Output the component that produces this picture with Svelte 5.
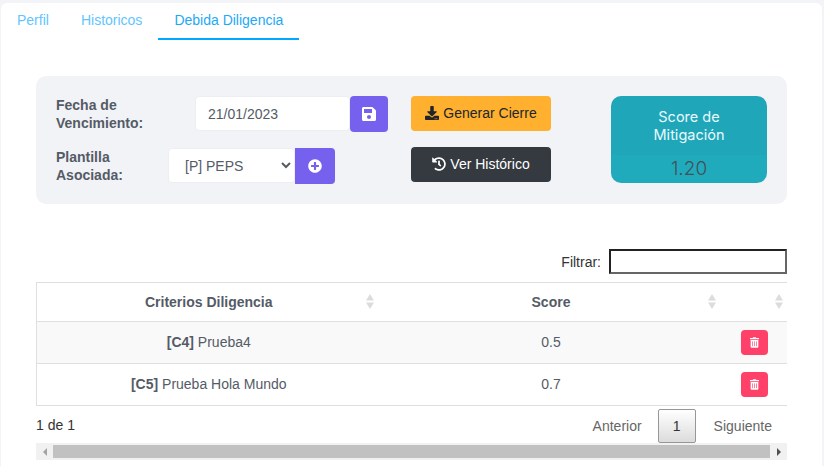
<script>
  let filter = $state('');
  const rows = [
    { code: 'C4', name: 'Prueba4', score: '0.5' },
    { code: 'C5', name: 'Prueba Hola Mundo', score: '0.7' }
  ];
</script>

{#snippet sortIcon()}
  <svg class="sort" width="8" height="15" viewBox="0 0 8 15"><path d="M4 0L8 6.5H0zM4 15L0 8.5h8z" fill="#dcdcdc"/></svg>
{/snippet}

<div class="card">
  <nav class="tabs">
    <a href="#perfil">Perfil</a>
    <a href="#historicos">Historicos</a>
    <a href="#debida" class="active">Debida Diligencia</a>
  </nav>

  <section class="panel">
    <div class="forms">
      <div class="field first">
        <label for="fecha">Fecha de Vencimiento:</label>
        <input id="fecha" class="ctl date" value="21/01/2023" />
        <button class="square save" aria-label="Guardar">
          <svg width="14" height="16" viewBox="0 0 448 512"><path fill="#fff" d="M433.941 129.941l-83.882-83.882A48 48 0 0 0 316.118 32H48C21.49 32 0 53.49 0 80v352c0 26.51 21.49 48 48 48h352c26.51 0 48-21.49 48-48V163.882a48 48 0 0 0-14.059-33.941zM224 416c-35.346 0-64-28.654-64-64 0-35.346 28.654-64 64-64s64 28.654 64 64c0 35.346-28.654 64-64 64zm96-304.52V212c0 6.627-5.373 12-12 12H76c-6.627 0-12-5.373-12-12V108c0-6.627 5.373-12 12-12h228.52c3.183 0 6.235 1.264 8.485 3.515l3.48 3.48A11.996 11.996 0 0 1 320 111.48z"/></svg>
        </button>
      </div>
      <div class="field second">
        <label for="plantilla">Plantilla Asociada:</label>
        <select id="plantilla" class="ctl pick"><option>[P] PEPS</option></select>
        <button class="square add" aria-label="Agregar">
          <svg width="14" height="14" viewBox="0 0 512 512"><path fill="#fff" d="M256 8C119 8 8 119 8 256s111 248 248 248 248-111 248-248S393 8 256 8zm144 276c0 6.6-5.4 12-12 12h-92v92c0 6.6-5.4 12-12 12h-56c-6.6 0-12-5.4-12-12v-92h-92c-6.6 0-12-5.4-12-12v-56c0-6.6 5.4-12 12-12h92v-92c0-6.6 5.4-12 12-12h56c6.6 0 12 5.4 12 12v92h92c6.6 0 12 5.4 12 12v56z"/></svg>
        </button>
      </div>
    </div>

    <div class="actions">
      <button class="act amber">
        <svg width="14" height="14" viewBox="0 0 512 512"><path fill="#212529" d="M216 0h80c13.3 0 24 10.7 24 24v168h87.7c17.8 0 26.7 21.5 14.1 34.1L269.7 378.3c-7.5 7.5-19.8 7.5-27.3 0L90.1 226.1c-12.6-12.6-3.7-34.1 14.1-34.1H192V24c0-13.3 10.7-24 24-24zm296 376v112c0 13.3-10.7 24-24 24H24c-13.3 0-24-10.7-24-24V376c0-13.3 10.7-24 24-24h146.7l49 49c20.1 20.1 52.5 20.1 72.6 0l49-49H488c13.3 0 24 10.7 24 24zm-124 88c0-11-9-20-20-20s-20 9-20 20 9 20 20 20 20-9 20-20zm64 0c0-11-9-20-20-20s-20 9-20 20 9 20 20 20 20-9 20-20z"/></svg>
        Generar Cierre
      </button>
      <button class="act dark">
        <svg width="14" height="14" viewBox="0 0 512 512"><path fill="#fff" d="M504 255.531c.253 136.64-111.18 248.372-247.82 248.468-59.015.042-113.223-20.53-155.822-54.911-11.077-8.94-11.905-25.541-1.839-35.607l11.267-11.267c8.609-8.609 22.353-9.551 31.891-1.984C173.062 425.135 212.781 440 256 440c101.705 0 184-82.311 184-184 0-101.705-82.311-184-184-184-48.814 0-93.149 18.969-126.068 49.932l50.754 50.754c10.08 10.08 2.941 27.314-11.313 27.314H24c-8.837 0-16-7.163-16-16V38.627c0-14.254 17.234-21.393 27.314-11.314l49.372 49.372C129.209 34.136 189.552 8 256 8c136.81 0 247.747 110.78 248 247.531zm-180.912 78.784l9.823-12.63c8.138-10.463 6.253-25.542-4.21-33.679L288 256.349V152c0-13.255-10.745-24-24-24h-16c-13.255 0-24 10.745-24 24v135.651l65.409 50.874c10.463 8.137 25.541 6.253 33.679-4.21z"/></svg>
        Ver Histórico
      </button>
    </div>

    <div class="score">
      <div class="score-title">Score de Mitigación</div>
      <div class="score-value">1.20</div>
    </div>
  </section>

  <div class="filter">
    <label for="filtrar">Filtrar:</label>
    <input id="filtrar" bind:value={filter} />
  </div>

  <div class="table-wrap">
    <table>
      <colgroup><col class="c1" /><col class="c2" /><col class="c3" /></colgroup>
      <thead>
        <tr>
          <th>Criterios Diligencia{@render sortIcon()}</th>
          <th>Score{@render sortIcon()}</th>
          <th>{@render sortIcon()}</th>
        </tr>
      </thead>
      <tbody>
        {#each rows as row}
          <tr>
            <td><b>[{row.code}]</b> {row.name}</td>
            <td>{row.score}</td>
            <td>
              <button class="del" aria-label="Eliminar">
                <svg width="9" height="11" viewBox="0 0 448 512"><path fill="#fff" d="M32 464a48 48 0 0 0 48 48h288a48 48 0 0 0 48-48V128H32zm272-256a16 16 0 0 1 32 0v224a16 16 0 0 1-32 0zm-96 0a16 16 0 0 1 32 0v224a16 16 0 0 1-32 0zm-96 0a16 16 0 0 1 32 0v224a16 16 0 0 1-32 0zM432 32H312l-9.4-18.7A24 24 0 0 0 281.1 0H166.8a23.72 23.72 0 0 0-21.4 13.3L136 32H16A16 16 0 0 0 0 48v32a16 16 0 0 0 16 16h416a16 16 0 0 0 16-16V48a16 16 0 0 0-16-16z"/></svg>
              </button>
            </td>
          </tr>
        {/each}
      </tbody>
    </table>
  </div>

  <div class="foot">
    <span class="info">1 de 1</span>
    <div class="pager">
      <span>Anterior</span>
      <span class="page">1</span>
      <span>Siguiente</span>
    </div>
  </div>

  <div class="scrollbar">
    <span class="arrow left"></span>
    <span class="thumb"></span>
    <span class="arrow right"></span>
  </div>
</div>

<style>
  :global(body) {
    margin: 0;
    height: 466px;
    overflow: hidden;
    background: #f3f4f8;
    font-family: "Liberation Sans", Arial, sans-serif;
    font-size: 14px;
    color: #555b66;
  }

  .card {
    box-sizing: border-box;
    height: 463px;
    margin: 3px 2px 0 1px;
    padding: 0 35px;
    background: #fff;
    border-radius: 6px 6px 0 0;
  }

  .tabs {
    display: flex;
    height: 37px;
    margin-left: -35px;
  }
  .tabs a {
    padding: 9px 16px 0;
    color: #62c5ff;
    text-decoration: none;
    line-height: 17px;
  }
  .tabs a.active {
    color: #1ea9f5;
    border-bottom: 2px solid #00a8ff;
  }

  .panel {
    display: flex;
    box-sizing: border-box;
    height: 128px;
    margin: 36px 0 0;
    padding: 20px;
    background: #f1f3f7;
    border-radius: 10px;
  }

  .forms {
    display: flex;
    flex-direction: column;
    gap: 16px;
    width: 355px;
  }
  .field {
    display: flex;
    height: 36px;
  }
  .field label {
    font-weight: 700;
    line-height: 18px;
    color: #555b66;
  }
  .first label { width: 139px; }
  .second label { width: 112px; }

  .ctl {
    box-sizing: border-box;
    height: 35px;
    border: 1px solid #eceef2;
    border-radius: 4px;
    background: #fff;
    font: 14px "Liberation Sans", Arial, sans-serif;
    color: #555b66;
    outline: none;
  }
  .date {
    width: 155px;
    padding: 0 12px;
  }
  .pick {
    width: 127px;
    padding: 0 12px;
  }

  .square {
    display: flex;
    align-items: center;
    justify-content: center;
    height: 36px;
    padding: 0;
    border: none;
    border-radius: 0 4px 4px 0;
    background: #7561ee;
  }
  .save {
    width: 38px;
    border-radius: 4px;
  }
  .add { width: 40px; }

  .actions {
    display: flex;
    flex-direction: column;
    gap: 16px;
    width: 200px;
  }
  .act {
    display: flex;
    align-items: center;
    justify-content: center;
    gap: 4px;
    box-sizing: border-box;
    width: 140px;
    height: 35px;
    padding: 0 0 1px;
    border: none;
    border-radius: 4px;
    font: 14px "Liberation Sans", Arial, sans-serif;
  }
  .amber {
    background: #ffb02e;
    color: #212529;
  }
  .dark {
    background: #343a40;
    color: #fff;
  }

  .score {
    display: flex;
    flex-direction: column;
    width: 156px;
    height: 87px;
    border-radius: 10px;
    overflow: hidden;
    text-align: center;
    font-family: Inter, sans-serif;
  }
  .score-title {
    box-sizing: border-box;
    height: 60px;
    padding: 12px 20px 0;
    background: #1fa6b8;
    color: #eafaff;
    font-size: 14.5px;
    line-height: 18px;
  }
  .score-value {
    flex: 1;
    background: #20abbd;
    color: #454f58;
    font-size: 19px;
    font-weight: 300;
    line-height: 28px;
  }

  .filter {
    display: flex;
    justify-content: flex-end;
    align-items: center;
    gap: 8px;
    margin-top: 45px;
    height: 25px;
    color: #333;
  }
  .filter input {
    box-sizing: border-box;
    width: 178px;
    height: 25px;
    padding: 0 2px;
    border: 2px solid;
    border-color: #222 #666 #666 #222;
    outline: none;
    background: #fff;
  }

  .table-wrap {
    margin-top: 8px;
    overflow: hidden;
  }
  table {
    width: 754px;
    border-collapse: collapse;
    table-layout: fixed;
  }
  .c1 { width: 344px; }
  .c2 { width: 343px; }
  .c3 { width: 67px; }
  th, td {
    padding: 0;
    text-align: center;
    border-bottom: 1px solid #dfdfdf;
  }
  th:nth-child(2), td:nth-child(2) { padding-right: 2px; }
  td:not(:last-child) { padding-bottom: 2px; }
  thead tr { border-top: 1px solid #dfdfdf; }
  th {
    position: relative;
    height: 38px;
    font-weight: 700;
    color: #555b66;
  }
  .sort {
    position: absolute;
    right: 7px;
    top: 11px;
  }
  th:not(:first-child) .sort { right: 8px; }
  td {
    box-sizing: border-box;
    height: 42px;
    color: #555b66;
  }
  td b { color: #555b66; }
  tbody tr:nth-child(odd) { background: #f9f9f9; }
  th:first-child, td:first-child { border-left: 1px solid #dfdfdf; }

  .del {
    display: inline-flex;
    align-items: center;
    justify-content: center;
    vertical-align: middle;
    width: 27px;
    height: 25px;
    margin-right: 5px;
    padding: 0;
    border: none;
    border-radius: 4px;
    background: #ff4069;
  }

  .foot {
    display: flex;
    justify-content: space-between;
    align-items: flex-start;
    height: 37px;
    padding-top: 3px;
    box-sizing: border-box;
  }
  .info {
    margin-top: 8px;
    color: #333;
  }
  .pager {
    display: flex;
    align-items: center;
    height: 34px;
    padding-right: 15px;
  }
  .pager span { color: #666; }
  .pager .page {
    box-sizing: border-box;
    width: 38px;
    height: 34px;
    margin: 0 18px 0 16px;
    border: 1px solid #979797;
    border-radius: 2px;
    background: linear-gradient(#fff, #dcdcdc);
    color: #333;
    line-height: 32px;
    text-align: center;
  }

  .scrollbar {
    display: flex;
    align-items: center;
    width: 751px;
    height: 17px;
    background: #f1f1f1;
  }
  .thumb {
    flex: 1;
    height: 13px;
    background: #c1c1c1;
  }
  .arrow {
    width: 17px;
    display: flex;
    justify-content: center;
  }
  .arrow::before {
    content: "";
    border: 4px solid transparent;
  }
  .arrow.left::before {
    border-right-color: #a3a3a3;
    border-left-width: 0;
  }
  .arrow.right::before {
    border-left-color: #505050;
    border-right-width: 0;
  }
</style>
